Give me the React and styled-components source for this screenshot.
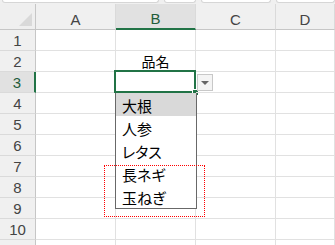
import React from 'react';
import styled, { createGlobalStyle, css } from 'styled-components';

const GlobalStyle = createGlobalStyle`
  html, body {
    margin: 0;
    padding: 0;
    background: #fff;
  }
  body {
    width: 335px;
    height: 245px;
    overflow: hidden;
    font-family: "Liberation Sans", "Noto Sans CJK JP", sans-serif;
  }
`;

const Window = styled.div`
  position: relative;
  width: 335px;
  height: 245px;
  overflow: hidden;
  background: #fff;
`;

const TopStrip = styled.div`
  display: flex;
  gap: 5px;
  height: 4px;
  background: #f0f0f0;
`;

const TopBox = styled.div`
  flex: ${(p) => (p.$grow ? 1 : 'none')};
  width: ${(p) => p.$w || 0}px;
  margin-left: ${(p) => p.$ml || 0}px;
  height: 2px;
  background: #fff;
  border: 1px solid #d6d6d6;
  border-top: none;
  border-radius: 0 0 3px 3px;
`;

const Sheet = styled.div`
  display: grid;
  grid-template-columns: 36px 80px 80px 80px 1fr;
  grid-template-rows: 26px repeat(11, 21px);
`;

const Corner = styled.div`
  position: relative;
  background: #efefef;
  border-right: 1px solid #c6c6c6;
  border-bottom: 1px solid #c6c6c6;

  &::after {
    content: '';
    position: absolute;
    right: 3px;
    bottom: 3px;
    width: 13px;
    height: 13px;
    background: #d9d9d9;
    clip-path: polygon(100% 0, 100% 100%, 0 100%);
  }
`;

const ColHead = styled.div`
  display: flex;
  align-items: center;
  justify-content: center;
  padding-top: 5px;
  box-sizing: border-box;
  background: #f0f0f0;
  border-right: 1px solid #dadada;
  border-bottom: 1px solid #c6c6c6;
  color: #444;
  font-size: 15px;

  ${(p) =>
    p.$active &&
    css`
      background: #e1e1e1;
      border-bottom: 2px solid #217346;
      color: #1f5c3a;
    `}
`;

const RowHead = styled.div`
  display: flex;
  align-items: center;
  justify-content: center;
  box-sizing: border-box;
  background: #f0f0f0;
  border-right: 1px solid #c6c6c6;
  border-bottom: 1px solid #dadada;
  color: #444;
  font-size: 15px;

  ${(p) =>
    p.$active &&
    css`
      background: #e1e1e1;
      border-right: 2px solid #217346;
      color: #1f5c3a;
    `}
`;

const Cell = styled.div`
  position: relative;
  display: flex;
  align-items: center;
  justify-content: center;
  box-sizing: border-box;
  border-right: 1px solid #e1e1e1;
  border-bottom: 1px solid #e1e1e1;
  font-family: "Noto Sans CJK JP", sans-serif;
  font-size: 14px;
  color: #000;
`;

const ActiveFrame = styled.div`
  position: absolute;
  top: -2px;
  left: -2px;
  right: -1px;
  bottom: -1px;
  border: 2px solid #217346;
  pointer-events: none;

  &::after {
    content: '';
    position: absolute;
    right: -4px;
    bottom: -4px;
    width: 5px;
    height: 5px;
    background: #217346;
    border-left: 1px solid #fff;
    border-top: 1px solid #fff;
  }
`;

const DropButton = styled.div`
  position: absolute;
  left: 81px;
  top: 2px;
  width: 16px;
  height: 17px;
  box-sizing: border-box;
  display: flex;
  align-items: center;
  justify-content: center;
  background: #f4f4f4;
  border: 1px solid #c8c8c8;

  &::before {
    content: '';
    width: 0;
    height: 0;
    border-left: 4px solid transparent;
    border-right: 4px solid transparent;
    border-top: 4px solid #666;
  }
`;

const List = styled.ul`
  position: absolute;
  left: -1px;
  top: 21px;
  z-index: 2;
  width: 82px;
  margin: 0;
  padding: 0;
  list-style: none;
  box-sizing: border-box;
  background: #fff;
  border: 1px solid #686868;
  border-top: none;
`;

const Item = styled.li`
  height: 23px;
  box-sizing: border-box;
  padding: 1px 0 0 6px;
  display: flex;
  align-items: center;
  font-family: "Noto Sans CJK JP", sans-serif;
  font-feature-settings: "palt";
  font-size: 15px;
  color: #000;
  background: ${(p) => (p.$hover ? '#d9d9d9' : 'transparent')};
`;

const Annotation = styled.div`
  position: absolute;
  left: 104px;
  top: 165px;
  width: 101px;
  height: 52px;
  box-sizing: border-box;
  border: 1px dotted #ff0000;
  z-index: 3;
  pointer-events: none;
`;

const cols = ['A', 'B', 'C', 'D'];
const items = ['大根', '人参', 'レタス', '長ネギ', '玉ねぎ'];

export default function App() {
  const rows = Array.from({ length: 11 }, (_, i) => i + 1);

  return (
    <Window>
      <GlobalStyle />
      <TopStrip>
        <TopBox $w={155} $ml={2} />
        <TopBox $w={30} />
        <TopBox $w={68} />
        <TopBox $grow />
      </TopStrip>
      <Sheet>
        <Corner />
        {cols.map((c) => (
          <ColHead key={c} $active={c === 'B'}>
            {c}
          </ColHead>
        ))}
        {rows.map((r) => (
          <React.Fragment key={r}>
            {/* row 11 sits below the window edge, only its top shows */}
            <RowHead $active={r === 3}>{r <= 10 ? r : ''}</RowHead>
            {cols.map((c) => (
              <Cell key={c}>
                {c === 'B' && r === 2 && '品名'}
                {c === 'B' && r === 3 && (
                  <>
                    <ActiveFrame />
                    <DropButton />
                    <List>
                      {items.map((it, i) => (
                        <Item key={it} $hover={i === 0}>
                          {it}
                        </Item>
                      ))}
                    </List>
                  </>
                )}
              </Cell>
            ))}
          </React.Fragment>
        ))}
      </Sheet>
      <Annotation />
    </Window>
  );
}
